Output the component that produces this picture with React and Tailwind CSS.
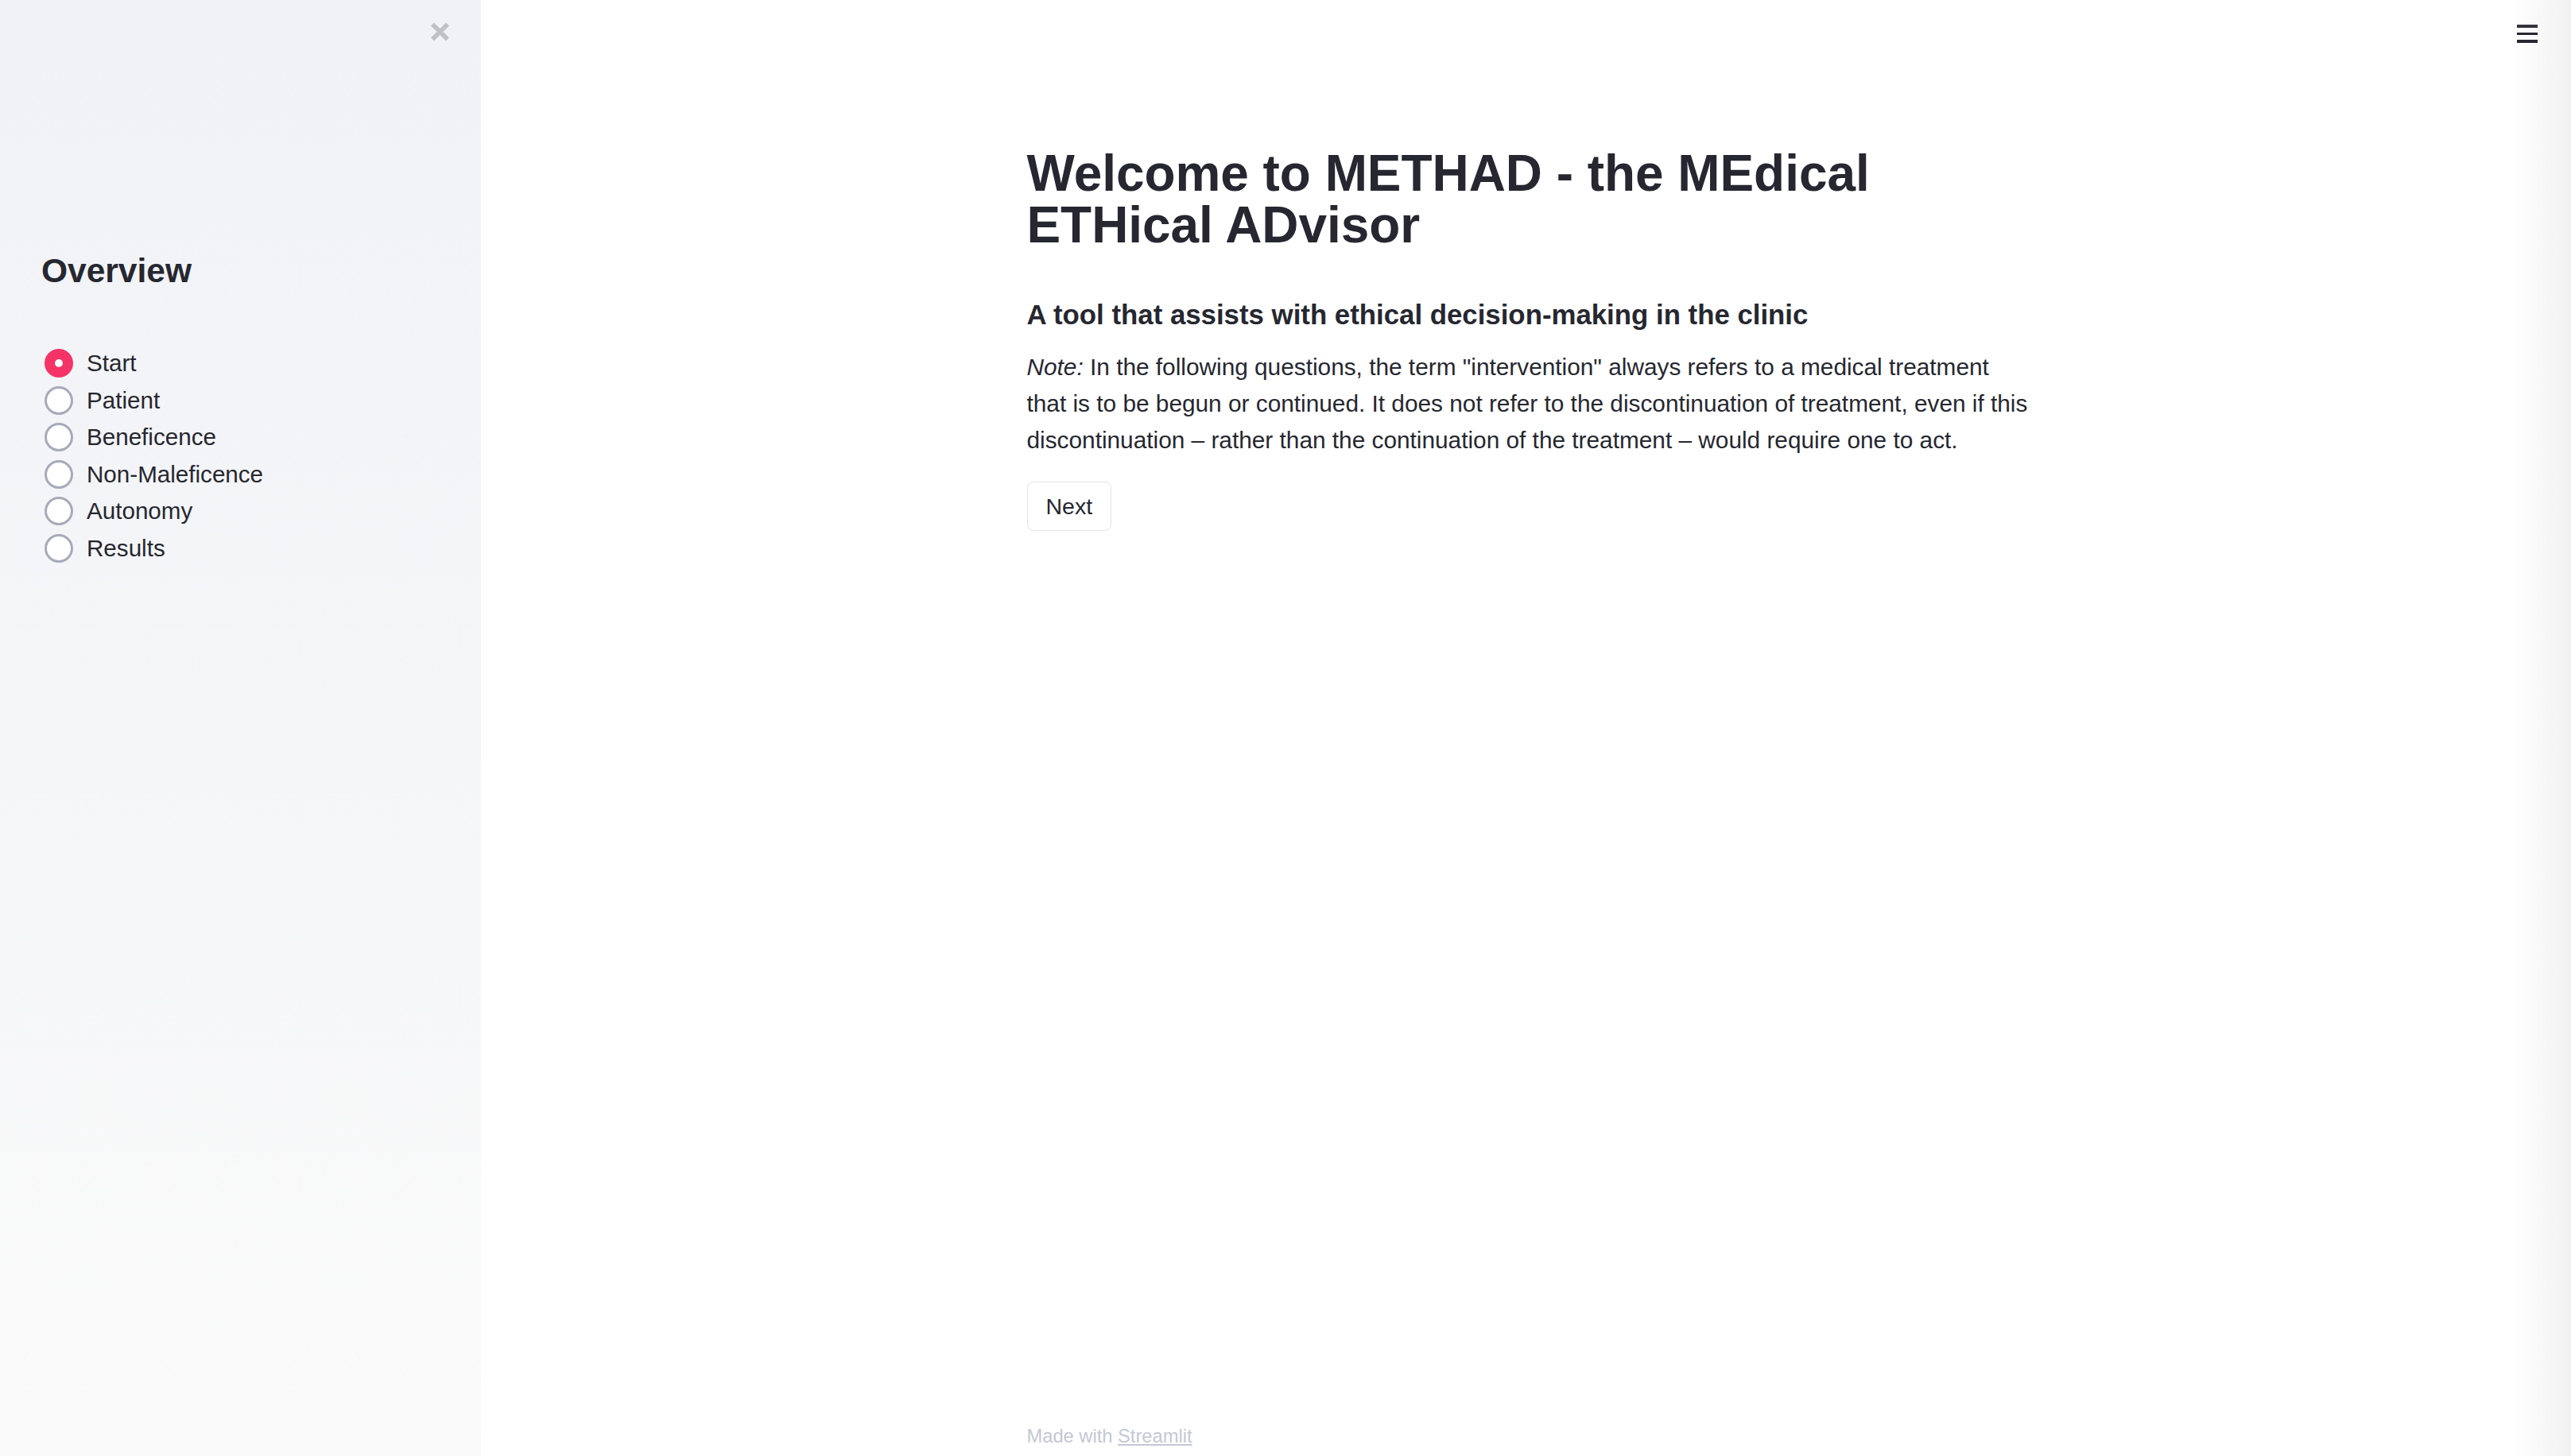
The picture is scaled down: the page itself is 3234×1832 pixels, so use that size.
import React from "react";

const items = ["Start", "Patient", "Beneficence", "Non-Maleficence", "Autonomy", "Results"];

function CloseIcon() {
  return (
    <svg width="25" height="26" viewBox="0 0 25 26" fill="none">
      <path d="M3 3.5 L22 22.5 M22 3.5 L3 22.5" stroke="#bfc1c7" strokeWidth="5.5" strokeLinecap="butt" />
    </svg>
  );
}

export default function App() {
  return (
    <div className="flex h-[1832px] w-full overflow-hidden bg-white text-[#262730] font-['Liberation_Sans',Arial,sans-serif]">
      <aside className="w-[605px] shrink-0 h-full bg-linear-to-b from-[#f0f2f6] to-[#fafafa] flex flex-col pl-[52px]">
        <div className="flex justify-end pt-[27px] pr-[39px]">
          <button className="block leading-none" aria-label="Close sidebar">
            <CloseIcon />
          </button>
        </div>
        <h2 className="mt-[262px] text-[42.5px] leading-[51px] font-bold">Overview</h2>
        <div className="mt-[68px] flex flex-col">
          {items.map((label, i) => (
            <div key={label} className="flex items-center h-[46.5px]">
              {i === 0 ? (
                <span className="ml-[4px] w-[36px] h-[36px] rounded-full bg-[#f63366] flex items-center justify-center shrink-0">
                  <span className="w-[10px] h-[10px] rounded-full bg-white" />
                </span>
              ) : (
                <span className="ml-[4px] w-[36px] h-[36px] rounded-full border-[3.6px] border-[#a6abba] bg-white shrink-0" />
              )}
              <span className="ml-[17px] text-[29.6px] leading-[46.5px]">{label}</span>
            </div>
          ))}
        </div>
      </aside>

      <main className="relative flex-1 h-full">
        <div className="absolute inset-y-0 right-0 w-[71px] bg-linear-to-r from-white to-[#f1f1f1]" />
        <button className="absolute top-[31px] right-[42px] flex flex-col gap-[6px]" aria-label="Menu">
          <span className="block w-[26px] h-[3.6px] bg-[#33343d]" />
          <span className="block w-[26px] h-[3.6px] bg-[#262730]" />
          <span className="block w-[26px] h-[3.6px] bg-[#262730]" />
        </button>

        <div className="mx-auto w-[1256px] h-full flex flex-col pt-[186px]">
          <h1 className="text-[63.9px] leading-[65px] font-bold whitespace-nowrap">
            Welcome to METHAD - the MEdical
            <br />
            ETHical ADvisor
          </h1>
          <h3 className="mt-[59px] text-[34.8px] leading-[41px] font-bold whitespace-nowrap">
            A tool that assists with ethical decision-making in the clinic
          </h3>
          <p className="mt-[23px] text-[29.8px] leading-[46px] whitespace-nowrap">
            <em>Note:</em> In the following questions, the term "intervention" always refers to a medical treatment
            <br />
            that is to be begun or continued. It does not refer to the discontinuation of treatment, even if this
            <br />
            discontinuation – rather than the continuation of the treatment – would require one to act.
          </p>
          <div className="mt-[29px]">
            <button className="inline-flex items-center justify-center h-[62px] px-[23px] border border-[#e1e4ea] rounded-[8px] bg-white text-[28.5px] text-[#262730]">
              Next
            </button>
          </div>
          <footer className="mt-auto mb-[11px] text-[23.7px] leading-[28px] text-[#c3c8d4]">
            Made with <a className="underline decoration-[#c3c8d4]">Streamlit</a>
          </footer>
        </div>
      </main>
    </div>
  );
}
